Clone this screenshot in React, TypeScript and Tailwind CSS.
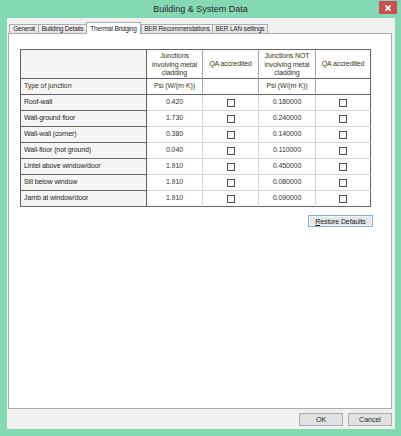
import React from "react";

const tabs = [
  { label: "General", w: "w-[29px]" },
  { label: "Building Details", w: "w-[48px]" },
  { label: "Thermal Bridging", w: "w-[55px]", active: true },
  { label: "BER Recommendations", w: "w-[71px]" },
  { label: "BER LAN settings", w: "w-[56px]" },
];

const junctions = [
  ["Roof-wall", "0.420", "0.180000"],
  ["Wall-ground floor", "1.730", "0.240000"],
  ["Wall-wall (corner)", "0.380", "0.140000"],
  ["Wall-floor (not ground)", "0.040", "0.110000"],
  ["Lintel above window/door", "1.910", "0.450000"],
  ["Sill below window", "1.910", "0.080000"],
  ["Jamb at window/door", "1.910", "0.090000"],
];

function CheckBox() {
  return <span className="block w-[8px] h-[8px] border border-[#505050] bg-white" />;
}

function JunctionGrid() {
  const head = "text-[#3b3320] text-center leading-[8.5px]";
  return (
    <div className="w-[351px] grid grid-cols-[126px_56px_56px_57px_55px] border-l border-t border-[#646464] text-[7px] tracking-[-0.1px]">
      {/* column headers */}
      <div className="h-[29px] bg-[#f5f5f5] border-r border-b border-[#646464]" />
      <div className={`h-[29px] pt-[2px] border-r border-b border-r-[#a8a8a8] border-b-[#646464] ${head}`}>
        Junctions
        <br />
        involving metal
        <br />
        cladding
      </div>
      <div className={`h-[29px] flex items-center justify-center border-r border-b border-r-[#a8a8a8] border-b-[#646464] ${head}`}>
        QA accredited
      </div>
      <div className={`h-[29px] pt-[2px] border-r border-b border-r-[#a8a8a8] border-b-[#646464] ${head}`}>
        Junctions NOT
        <br />
        involving metal
        <br />
        cladding
      </div>
      <div className={`h-[29px] flex items-center justify-center border-r border-b border-[#646464] ${head}`}>
        QA accredited
      </div>

      <div className="h-[16px] flex items-center pl-[3px] bg-[#f5f5f5] text-[#3b3320] border-r border-b border-[#646464]">
        Type of junction
      </div>
      <div className="h-[16px] flex items-center justify-center text-[#3b3320] border-r border-b border-r-[#a8a8a8] border-b-[#646464]">
        Psi (W/(m·K))
      </div>
      <div className="h-[16px] border-r border-b border-r-[#a8a8a8] border-b-[#646464]" />
      <div className="h-[16px] flex items-center justify-center text-[#3b3320] border-r border-b border-r-[#a8a8a8] border-b-[#646464]">
        Psi (W/(m·K))
      </div>
      <div className="h-[16px] border-r border-b border-[#646464]" />

      {junctions.map(([name, psi, psiNot], i) => {
        const last = i === junctions.length - 1;
        const bottom = last ? "border-b-[#646464]" : "border-b-[#d6d6d6]";
        return (
          <React.Fragment key={name}>
            <div className="h-[16px] flex items-center pl-[3px] bg-[#f5f5f5] text-[#1e1e1e] border-r border-b border-[#646464]">
              {name}
            </div>
            <div className={`h-[16px] flex items-center justify-center text-[#333] border-r border-b border-r-[#d6d6d6] ${bottom}`}>
              {psi}
            </div>
            <div className={`h-[16px] flex items-center justify-center border-r border-b border-r-[#d6d6d6] ${bottom}`}>
              <CheckBox />
            </div>
            <div className={`h-[16px] flex items-center justify-center text-[#333] border-r border-b border-r-[#d6d6d6] ${bottom}`}>
              {psiNot}
            </div>
            <div className={`h-[16px] flex items-center justify-center border-r border-b border-r-[#646464] ${bottom}`}>
              <CheckBox />
            </div>
          </React.Fragment>
        );
      })}
    </div>
  );
}

export default function App() {
  return (
    <div className="w-[401px] h-[436px] bg-[#84d8b4] flex flex-col overflow-hidden font-['Liberation_Sans',Arial,sans-serif] text-[#1e1e1e]">
      {/* title bar */}
      <div className="h-[18px] grid grid-cols-[1fr_auto_1fr] items-start px-[4px]">
        <div />
        <div className="pt-[4px] text-[9px] leading-[11px] text-[#2a2a2a]">Building &amp; System Data</div>
        <button className="justify-self-end mt-[1px] w-[18px] h-[13px] bg-[#c75050] flex items-center justify-center">
          <svg width="6" height="6" viewBox="0 0 6 6">
            <path d="M0.5 0.5 L5.5 5.5 M5.5 0.5 L0.5 5.5" stroke="#fff" strokeWidth="1.6" />
          </svg>
        </button>
      </div>

      {/* client area */}
      <div className="ml-[7px] mr-[6px] mb-[7px] flex-1 bg-[#f0f0f0] flex flex-col">
        <div className="ml-[2px] mt-[4px] h-[11px] flex items-end relative z-10">
          {tabs.map((t) =>
            t.active ? (
              <div
                key={t.label}
                className={`${t.w} h-[12px] relative top-px bg-white border-t border-l border-r border-[#acacac] flex items-center justify-center text-[6.5px] tracking-[-0.2px] whitespace-nowrap`}
              >
                {t.label}
              </div>
            ) : (
              <div
                key={t.label}
                className={`${t.w} h-[9px] bg-gradient-to-b from-[#f2f2f2] to-[#e3e3e3] border-t border-l border-[#acacac] last:border-r flex items-center justify-center text-[6.5px] tracking-[-0.2px] whitespace-nowrap`}
              >
                {t.label}
              </div>
            )
          )}
        </div>

        <div className="ml-[1px] w-[384px] h-[376px] bg-white border border-[#acacac] pl-[11px] pt-[15px]">
          <JunctionGrid />
          <div className="w-[353px] flex justify-end mt-[8px]">
            <button className="w-[65px] h-[12px] border border-[#7cb2e6] bg-[#e6e6e6] shadow-[inset_0_0_0_1px_#f4f4f4] text-[7px] leading-none tracking-[-0.1px]">
              <span className="underline">R</span>estore Defaults
            </button>
          </div>
        </div>

        <div className="mt-[4px] flex justify-end gap-[5px] pr-[3px]">
          <button className="w-[44px] h-[13px] border border-[#adadad] bg-[#e1e1e1] text-[7px] leading-none">OK</button>
          <button className="w-[44px] h-[13px] border border-[#adadad] bg-[#e1e1e1] text-[7px] leading-none">Cancel</button>
        </div>
      </div>
    </div>
  );
}
